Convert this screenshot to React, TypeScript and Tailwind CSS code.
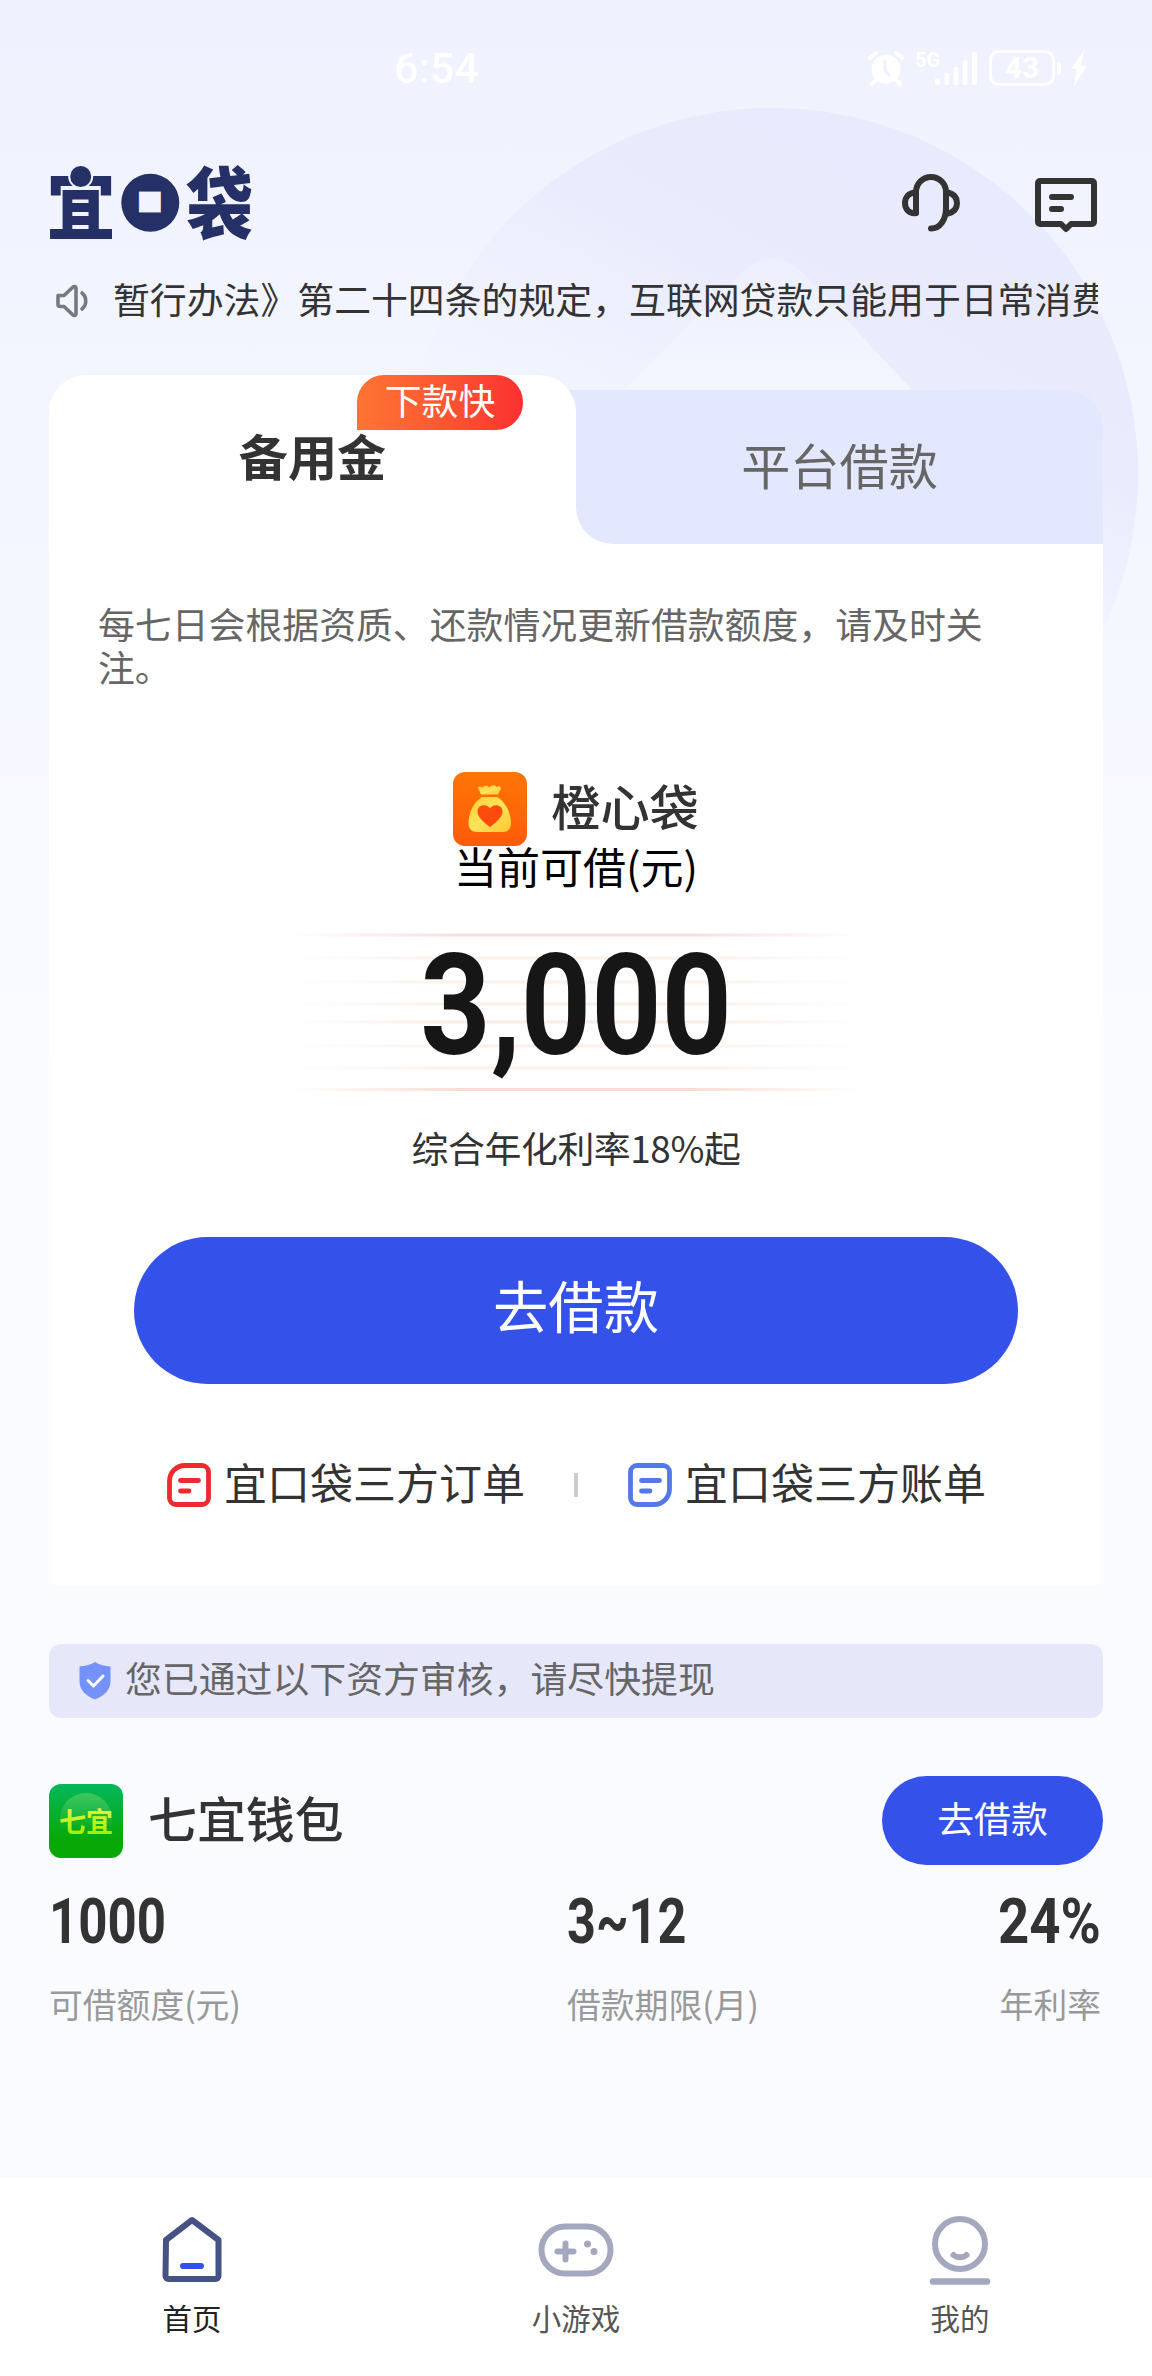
import { ReactNode } from 'react';
import clsx from 'clsx';

function StatusBar() {
  return (
    <div className="flex h-[134px] shrink-0 items-center pl-[394px] pr-[64px] pt-[2px] text-white">
      <span className="font-[Roboto] text-[43px] font-medium leading-none">6:54</span>
      <div className="ml-auto flex items-center">
        <svg className="h-[36px] w-[36px]" viewBox="0 0 36 36">
          <circle cx="18" cy="19" r="14.500" fill="#fff" />
          <path d="M2 8l6-5M34 8l-6-5M8 30l-4 4M28 30l4 4" stroke="#fff" strokeWidth="4" strokeLinecap="round" />
          <path d="M17 11v9l4 5" fill="none" stroke="#eff1fe" strokeWidth="3" strokeLinecap="round" />
        </svg>
        <svg className="ml-[11px] h-[36px] w-[64px] overflow-visible" viewBox="0 0 64 36">
          <text x="0" y="17" fill="#fff" fontFamily="Roboto" fontSize="20" fontWeight="700">5G</text>
          <rect x="20" y="28" width="5" height="7" rx="2" fill="#fff" />
          <rect x="29.500" y="23" width="5" height="12" rx="2" fill="#fff" />
          <rect x="38.500" y="17" width="5" height="18" rx="2" fill="#fff" />
          <rect x="47.500" y="10" width="5" height="25" rx="2" fill="#fff" />
          <rect x="57" y="2" width="5" height="33" rx="2" fill="#fff" />
        </svg>
        <div className="ml-[10px] flex h-[36px] w-[66px] items-center justify-center rounded-[10px] border-[3px] border-white font-[Roboto] text-[30px] font-bold leading-none">
          43
        </div>
        <span className="ml-[2px] h-[13px] w-[4px] rounded-r-full bg-white" />
        <svg className="ml-[9px] h-[36px] w-[18px]" viewBox="0 0 18 36">
          <path d="M14 0L1 19h6L4 36l13-20h-6z" fill="#fff" />
        </svg>
      </div>
    </div>
  );
}

function Logo() {
  return (
    <svg className="h-[74px] w-[203px] overflow-visible" viewBox="0 0 203 74" aria-label="宜口袋">
      <g fill="#253066" fontFamily="'Noto Sans CJK SC', sans-serif" fontWeight="900">
        <text transform="translate(-2.500 67.500) scale(.91 1)" fontSize="76">宜</text>
        <text x="79" y="53" fontSize="44">口</text>
        <text transform="translate(137 66.500) scale(.86 1)" fontSize="78">袋</text>
        <path
          fillRule="evenodd"
          d="M101.300 7.700a29 29 0 1 0 0 58a29 29 0 1 0 0-58zM91 23h21a2 2 0 0 1 2 2v23a2 2 0 0 1-2 2H91a2 2 0 0 1-2-2V25a2 2 0 0 1 2-2z"
        />
      </g>
      <circle cx="31.700" cy="10.500" r="11.500" fill="#253066" stroke="#f0f2fe" strokeWidth="2" />
    </svg>
  );
}

function HeadsetIcon() {
  return (
    <svg className="h-[58px] w-[58px]" viewBox="0 0 58 58" fill="none" stroke="#333" strokeWidth="6" strokeLinecap="round" strokeLinejoin="round">
      <path d="M14 39V18a15 15 0 0 1 30 0v16c0 12-6 20.500-15 20.500" />
      <path d="M13 18.500C6 19 3 24 3 29c0 6 4 11 11 10" />
      <path d="M46 18.500c6 1.500 9 5.500 9 10.500s-3 9-9 10.500" />
    </svg>
  );
}

function MessageIcon() {
  return (
    <svg className="mt-[4px] h-[55px] w-[62px]" viewBox="0 0 62 55" fill="none" stroke="#333" strokeWidth="6" strokeLinecap="round" strokeLinejoin="round">
      <path d="M5 3h52a2 2 0 0 1 2 2v39a2 2 0 0 1-2 2H36l-5 5-5-5H5a2 2 0 0 1-2-2V5a2 2 0 0 1 2-2z" />
      <path d="M17 19h19M17 31h9" />
    </svg>
  );
}

function SpeakerIcon() {
  return (
    <svg className="mt-[3px] h-[34px] w-[34px]" viewBox="0 0 34 34" fill="none" stroke="#77797f" strokeWidth="3.600" strokeLinecap="round" strokeLinejoin="round">
      <path d="M2 11.500h6l9-8.500c1-1 3-.500 3 1v26c0 1.500-2 2-3 1l-9-8.500H4a2 2 0 0 1-2-2z" />
      <path d="M26 9c5 4 5 12 0 16" />
    </svg>
  );
}

function MoneyBagIcon() {
  return (
    <svg className="h-[74px] w-[74px]" viewBox="0 0 74 74">
      <defs>
        <linearGradient id="bagTile" x1="0" y1="0" x2="0" y2="1">
          <stop offset="0" stopColor="#ff7605" />
          <stop offset="1" stopColor="#ff5a0a" />
        </linearGradient>
        <linearGradient id="bag" x1="0" y1="0" x2="1" y2="1">
          <stop offset="0" stopColor="#ffcf33" />
          <stop offset=".5" stopColor="#ffe35a" />
          <stop offset="1" stopColor="#ffc62e" />
        </linearGradient>
      </defs>
      <rect width="74" height="74" rx="12" fill="url(#bagTile)" />
      <path d="M28 22.500l-3-6.500c0-2 3-2 4.500-.500 2-2.500 5-2.500 7 0 2-2.500 5-3 7-.500 2-1.500 4.500-.500 4.500 1.500l-3 6z" fill="url(#bag)" />
      <path d="M29 25h15c9 5 14 16 14 26 0 6-3 9-8 9H24c-5 0-8.500-3-8.500-9 0-10 5-21 13.500-26z" fill="url(#bag)" />
      <path d="M37 55C29.500 49.500 24.500 44.500 24.500 39.500c0-7 9-8.500 12.500-3 3.500-5.500 12.500-4 12.500 3 0 5-5 10-12.500 15.500z" fill="#ff4b0c" />
    </svg>
  );
}

function BillIcon({ color, flipped }: { color: string; flipped?: boolean }) {
  return (
    <svg className="h-[46px] w-[46px]" viewBox="0 0 46 46" fill="none" stroke={color} strokeLinecap="round" strokeLinejoin="round">
      <path
        transform={flipped ? 'rotate(180 23 23)' : undefined}
        d="M19 3.500h17a6.500 6.500 0 0 1 6.500 6.500v26a6.500 6.500 0 0 1-6.500 6.500H10A6.500 6.500 0 0 1 3.500 36V19A15.500 15.500 0 0 1 19 3.500z"
        strokeWidth="4.800"
      />
      <path d="M14.500 18.500h18M14.500 29h8.500" strokeWidth="4.800" />
    </svg>
  );
}

function ShieldIcon() {
  return (
    <svg className="h-[38px] w-[32px]" viewBox="0 0 32 38">
      <path d="M16 0c5 3 10 4 15.500 4.500V19c0 9-6 14.500-15.500 18.500C6.500 33.500.5 28 .5 19V4.500C6 4 11 3 16 0z" fill="#7591fb" />
      <path d="M9 18.500l5.500 5.500L24 14" fill="none" stroke="#fff" strokeWidth="3" strokeLinecap="round" strokeLinejoin="round" />
    </svg>
  );
}

function WalletLogo() {
  return (
    <svg className="h-[74px] w-[74px]" viewBox="0 0 74 74">
      <defs>
        <linearGradient id="walletTile" x1="0" y1="0" x2="0" y2="1">
          <stop offset="0" stopColor="#05b75c" />
          <stop offset=".75" stopColor="#08a807" />
          <stop offset="1" stopColor="#08a807" />
        </linearGradient>
        <linearGradient id="walletGlow" x1="0" y1="0" x2="0" y2="1">
          <stop offset="0" stopColor="#3cc65a" />
          <stop offset=".7" stopColor="#3cc65a" stopOpacity="0" />
        </linearGradient>
        <linearGradient id="walletText" x1="0" y1="0" x2="0" y2="1">
          <stop offset=".2" stopColor="#e6f53c" />
          <stop offset=".9" stopColor="#9df000" />
        </linearGradient>
      </defs>
      <rect width="74" height="74" rx="12" fill="url(#walletTile)" />
      <circle cx="37" cy="35" r="26" fill="url(#walletGlow)" />
      <text x="10" y="47.500" fontSize="27" fontWeight="700" fill="url(#walletText)" fontFamily="'Noto Sans CJK SC', sans-serif">
        七宜
      </text>
    </svg>
  );
}

const LINES = [
  { y: 4, color: '#f8dedb' },
  { y: 27, color: '#fbf0ea' },
  { y: 51, color: '#fbf2ea' },
  { y: 73, color: '#fbf0e8' },
  { y: 91, color: '#fbece3' },
  { y: 115, color: '#fcf1ea' },
  { y: 137, color: '#fcf1ea' },
  { y: 158.5, color: '#f9ddd5' },
];

function Amount() {
  return (
    <div className="relative mt-[44px] flex h-[164px] w-[600px] items-center justify-center">
      <svg className="absolute inset-0 h-full w-full" viewBox="0 0 600 164">
        <defs>
          <linearGradient id="fade">
            <stop offset="0" stopColor="#fff" />
            <stop offset=".3" stopColor="#fff" stopOpacity="0" />
            <stop offset=".7" stopColor="#fff" stopOpacity="0" />
            <stop offset="1" stopColor="#fff" />
          </linearGradient>
        </defs>
        {LINES.map((line) => (
          <rect key={line.y} x="14" y={line.y - 1.5} width="572" height="3" fill={line.color} />
        ))}
        <rect x="14" width="572" height="164" fill="url(#fade)" />
      </svg>
      <span className="relative -top-[8px] scale-x-[.87] font-[Roboto] text-[141px] font-bold leading-none text-[#161616]">
        3,000
      </span>
    </div>
  );
}

const STATS = [
  { value: '1000', label: '可借额度(元)', position: 'w-[518px] items-start', scale: 'origin-left scale-x-[.81]' },
  { value: '3~12', label: '借款期限(月)', position: 'items-start', scale: 'origin-left scale-x-[.8]' },
  { value: '24%', label: '年利率', position: 'ml-auto items-end', scale: 'origin-right scale-x-[.865]' },
];

function NavItem({ label, active, children }: { label: string; active?: boolean; children: ReactNode }) {
  return (
    <div className="flex flex-1 flex-col items-center pt-[35px]">
      <svg className="h-[76px] w-[80px]" viewBox="0 0 80 76" fill="none" strokeLinecap="round" strokeLinejoin="round">
        {children}
      </svg>
      <span className={clsx('mt-[6px] text-[29.500px] leading-[44px]', active ? 'text-[#222]' : 'text-[#555]')}>{label}</span>
    </div>
  );
}

export default function App() {
  return (
    <div className="relative flex h-[2376px] w-[1152px] flex-col overflow-hidden bg-[#fafbff] bg-[linear-gradient(180deg,#eff1fe_0px,#f4f6ff_500px,#fafbff_1050px)] font-['Noto_Sans_CJK_SC',sans-serif] text-[#333]">
      <svg className="absolute left-0 top-0 h-[900px] w-full" viewBox="0 0 1152 900">
        <defs>
          <linearGradient id="disc" x1=".75" y1=".1" x2=".4" y2=".75">
            <stop offset="0" stopColor="#e8eafd" />
            <stop offset=".35" stopColor="#eaecfd" />
            <stop offset=".9" stopColor="#f2f4ff" stopOpacity="0" />
          </linearGradient>
          <linearGradient id="peak" x1="0" y1="0" x2="0" y2="1">
            <stop offset="0" stopColor="#edeffe" />
            <stop offset="1" stopColor="#f4f6ff" />
          </linearGradient>
        </defs>
        <circle cx="772" cy="474" r="366" fill="url(#disc)" />
        <path d="M621 392L746 268q26-19 52 0L914 392z" fill="url(#peak)" />
      </svg>

      <div className="relative flex flex-1 flex-col">
        <StatusBar />

        <header className="flex h-[138px] items-center pl-[49px] pr-[55px]">
          <Logo />
          <div className="ml-auto flex items-center gap-[75px]">
            <HeadsetIcon />
            <MessageIcon />
          </div>
        </header>

        <div className="mt-[5px] flex h-[44px] items-center pl-[56px] pr-[54px]">
          <SpeakerIcon />
          <p className="mb-[3px] ml-[23px] flex-1 overflow-hidden whitespace-nowrap text-[36.860px] leading-[44px]">
            暂行办法》第二十四条的规定，互联网贷款只能用于日常消费
          </p>
        </div>

        <section className="mx-[49px] mt-[54px] flex h-[1211px] flex-col">
          <div className="flex h-[169px] items-end">
            <div className="relative h-[169px] w-[527px]">
              <span className="absolute right-0 top-[15px] h-[40px] w-[40px] bg-[#e3e8fe]" />
              <div className="relative flex h-full justify-center rounded-t-[37px] bg-white pt-[48px]">
                <span className="text-[49.150px] font-bold leading-[64px]">备用金</span>
                <span className="absolute left-[308px] top-0 flex h-[55px] w-[166px] items-center justify-center rounded-[27px] rounded-bl-none bg-linear-to-r from-[#fd7433] to-[#fb2f30] pb-[6px] text-[36.860px] leading-none text-white">
                  下款快
                </span>
              </div>
            </div>
            <div className="h-[154px] flex-1 rounded-tr-[37px] bg-[linear-gradient(180deg,transparent_50%,#fff_50%)]">
              <div className="flex h-full items-center justify-center rounded-bl-[37px] rounded-tr-[37px] bg-[#e3e8fe] pb-[7px] text-[49.150px] text-[#666]">
                平台借款
              </div>
            </div>
          </div>

          <div className="flex flex-1 flex-col items-center rounded-b-[12px] bg-white">
            <p className="mt-[58px] w-full pl-[49px] pr-[100px] text-[36.860px] leading-[43px] text-[#666]">
              每七日会根据资质、还款情况更新借款额度，请及时关注。
            </p>
            <div className="mt-[84px] flex items-center gap-[24px]">
              <MoneyBagIcon />
              <span className="pb-[8px] text-[49.150px] font-medium leading-[64px]">橙心袋</span>
            </div>
            <span className="-mt-[3px] text-[43px] leading-[44px] text-black">当前可借(元)</span>
            <Amount />
            <span className="mt-[30px] text-[36.860px] leading-[44px] tracking-[-.4px]">综合年化利率18%起</span>
            <button className="mt-[68px] flex h-[147px] w-[884px] items-center justify-center rounded-full bg-[#3451ea] pb-[11px] text-[55.300px] leading-none text-white">
              去借款
            </button>
            <div className="mt-[70px] flex h-[62px] items-center text-[43px] leading-none">
              <BillIcon color="#ee2a2f" />
              <span className="ml-[12px] pb-[7px]">宜口袋三方订单</span>
              <span className="mx-[49px] h-[24px] w-[4px] bg-[#ccc]" />
              <BillIcon color="#5478e8" flipped />
              <span className="ml-[12px] pb-[7px]">宜口袋三方账单</span>
            </div>
          </div>
        </section>

        <div className="mx-[49px] mt-[58px] flex h-[74px] items-center gap-[14px] rounded-[12px] bg-[#e6e8fa] pl-[30px] text-[36.860px] text-[#666]">
          <ShieldIcon />
          <span className="pb-[7px] leading-none">您已通过以下资方审核，请尽快提现</span>
        </div>

        <section className="mx-[49px] mt-[58px]">
          <div className="flex h-[89px] items-center">
            <WalletLogo />
            <span className="ml-[25px] pb-[7px] text-[48.900px] font-medium leading-none">七宜钱包</span>
            <button className="ml-auto flex h-[89px] w-[221px] items-center justify-center rounded-full bg-[#3451ea] pb-[6px] text-[36.860px] leading-none text-white">
              去借款
            </button>
          </div>
          <div className="mt-[25px] flex pr-[2px]">
            {STATS.map((stat) => (
              <div key={stat.label} className={clsx('flex flex-col', stat.position)}>
                <span className={clsx('font-[Roboto] text-[63px] font-bold leading-[64px]', stat.scale)}>
                  {stat.value}
                </span>
                <span className="mt-[28px] text-[33.800px] leading-[44px] text-[#999]">{stat.label}</span>
              </div>
            ))}
          </div>
        </section>
      </div>

      <nav className="relative flex h-[198px] bg-white">
        <NavItem label="首页" active>
          <path d="M14 27L40 7l26.500 20v36a3 3 0 0 1-3 3h-47a3 3 0 0 1-3-3z" stroke="#455284" strokeWidth="6" />
          <path d="M31 53h18" stroke="#3350ec" strokeWidth="6" />
        </NavItem>
        <NavItem label="小游戏">
          <rect x="5.500" y="13.500" width="69" height="47" rx="23.500" stroke="#a4a8be" strokeWidth="6" />
          <path d="M21.500 38.500h16M29.500 30.500v16" stroke="#a4a8be" strokeWidth="6" />
          <circle cx="51.500" cy="31" r="3.500" fill="#a4a8be" />
          <circle cx="58" cy="38.500" r="3.500" fill="#a4a8be" />
        </NavItem>
        <NavItem label="我的">
          <circle cx="40" cy="31" r="25" stroke="#a4a8be" strokeWidth="6" />
          <path d="M33.500 42c3 3 10 3 13 0" fill="#a4a8be" stroke="#a4a8be" strokeWidth="6" />
          <path d="M13 68.500h54" stroke="#a4a8be" strokeWidth="6.500" />
        </NavItem>
      </nav>
    </div>
  );
}
